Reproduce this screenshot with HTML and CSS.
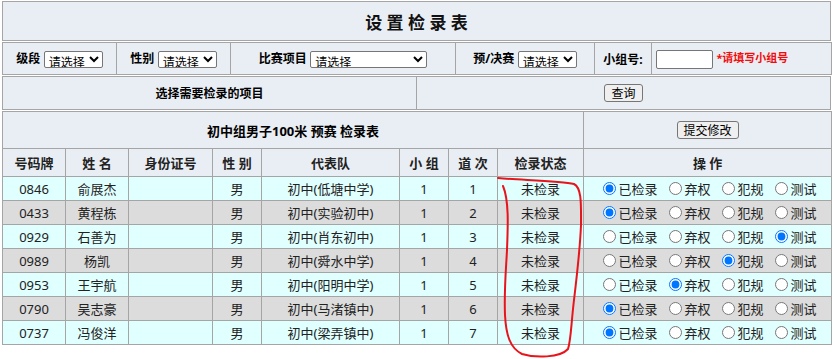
FILE: index.html
```html
<!DOCTYPE html>
<html lang="zh-CN">
<head>
    <meta charset="UTF-8">
    <title>设置检录表</title>
    <link rel="stylesheet" href="styles.css">
</head>
<body>
    <div class="page">
        <!-- Title -->
        <table class="title-bar">
            <tr><td>设 置 检 录 表</td></tr>
        </table>

        <!-- Filters -->
        <table class="filters">
            <colgroup>
                <col class="f-grade"><col class="f-sex"><col class="f-event"><col class="f-round"><col class="f-group-lbl"><col class="f-group">
            </colgroup>
            <tr>
                <td><span class="lbl">级段</span> <select class="sel"><option>请选择</option></select></td>
                <td><span class="lbl">性别</span> <select class="sel"><option>请选择</option></select></td>
                <td><span class="lbl">比赛项目</span> <select class="sel sel-wide"><option>请选择</option></select></td>
                <td><span class="lbl">预/决赛</span> <select class="sel"><option>请选择</option></select></td>
                <td><span class="lbl">小组号:</span></td>
                <td class="left"><input type="text" class="group-input"> <span class="hint">*请填写小组号</span></td>
            </tr>
        </table>

        <!-- Query -->
        <table class="query">
            <tr>
                <td class="lbl">选择需要检录的项目</td>
                <td><button class="btn">查询</button></td>
            </tr>
        </table>

        <!-- Roster -->
        <table class="roster">
            <colgroup>
                <col class="c-no"><col class="c-name"><col class="c-id"><col class="c-sex"><col class="c-team"><col class="c-group"><col class="c-lane"><col class="c-state"><col class="c-ops">
            </colgroup>
            <tr class="caption">
                <td colspan="8">初中组男子100米 预赛 检录表</td>
                <td><button class="btn">提交修改</button></td>
            </tr>
            <tr class="head">
                <th>号码牌</th><th>姓 名</th><th>身份证号</th><th>性 别</th><th>代表队</th><th>小 组</th><th>道 次</th><th>检录状态</th><th>操 作</th>
            </tr>
            <tr class="odd">
                <td>0846</td><td>俞展杰</td><td></td><td>男</td><td>初中(低塘中学)</td><td>1</td><td>1</td><td>未检录</td>
                <td><div class="ops">
                    <label class="opt"><input type="radio" name="r1" checked>已检录</label>
                    <label class="opt"><input type="radio" name="r1">弃权</label>
                    <label class="opt"><input type="radio" name="r1">犯规</label>
                    <label class="opt"><input type="radio" name="r1">测试</label>
                </div></td>
            </tr>
            <tr class="even">
                <td>0433</td><td>黄程栋</td><td></td><td>男</td><td>初中(实验初中)</td><td>1</td><td>2</td><td>未检录</td>
                <td><div class="ops">
                    <label class="opt"><input type="radio" name="r2" checked>已检录</label>
                    <label class="opt"><input type="radio" name="r2">弃权</label>
                    <label class="opt"><input type="radio" name="r2">犯规</label>
                    <label class="opt"><input type="radio" name="r2">测试</label>
                </div></td>
            </tr>
            <tr class="odd">
                <td>0929</td><td>石善为</td><td></td><td>男</td><td>初中(肖东初中)</td><td>1</td><td>3</td><td>未检录</td>
                <td><div class="ops">
                    <label class="opt"><input type="radio" name="r3">已检录</label>
                    <label class="opt"><input type="radio" name="r3">弃权</label>
                    <label class="opt"><input type="radio" name="r3">犯规</label>
                    <label class="opt"><input type="radio" name="r3" checked>测试</label>
                </div></td>
            </tr>
            <tr class="even">
                <td>0989</td><td>杨凯</td><td></td><td>男</td><td>初中(舜水中学)</td><td>1</td><td>4</td><td>未检录</td>
                <td><div class="ops">
                    <label class="opt"><input type="radio" name="r4">已检录</label>
                    <label class="opt"><input type="radio" name="r4">弃权</label>
                    <label class="opt"><input type="radio" name="r4" checked>犯规</label>
                    <label class="opt"><input type="radio" name="r4">测试</label>
                </div></td>
            </tr>
            <tr class="odd">
                <td>0953</td><td>王宇航</td><td></td><td>男</td><td>初中(阳明中学)</td><td>1</td><td>5</td><td>未检录</td>
                <td><div class="ops">
                    <label class="opt"><input type="radio" name="r5">已检录</label>
                    <label class="opt"><input type="radio" name="r5" checked>弃权</label>
                    <label class="opt"><input type="radio" name="r5">犯规</label>
                    <label class="opt"><input type="radio" name="r5">测试</label>
                </div></td>
            </tr>
            <tr class="even">
                <td>0790</td><td>吴志豪</td><td></td><td>男</td><td>初中(马渚镇中)</td><td>1</td><td>6</td><td>未检录</td>
                <td><div class="ops">
                    <label class="opt"><input type="radio" name="r6" checked>已检录</label>
                    <label class="opt"><input type="radio" name="r6">弃权</label>
                    <label class="opt"><input type="radio" name="r6">犯规</label>
                    <label class="opt"><input type="radio" name="r6">测试</label>
                </div></td>
            </tr>
            <tr class="odd">
                <td>0737</td><td>冯俊洋</td><td></td><td>男</td><td>初中(梁弄镇中)</td><td>1</td><td>7</td><td>未检录</td>
                <td><div class="ops">
                    <label class="opt"><input type="radio" name="r7" checked>已检录</label>
                    <label class="opt"><input type="radio" name="r7">弃权</label>
                    <label class="opt"><input type="radio" name="r7">犯规</label>
                    <label class="opt"><input type="radio" name="r7">测试</label>
                </div></td>
            </tr>
        </table>
    </div>

    <!-- hand-drawn annotation around the status column -->
    <svg class="mark" width="835" height="359" viewBox="0 0 835 359">
        <path d="M 498 178 C 520 180, 560 181, 574 184 C 582 188, 581 205, 581 225 C 580 250, 577 275, 574 300 C 571 325, 571 340, 568 349 C 560 358, 535 358, 522 354 C 510 348, 506 335, 505 315 C 504 290, 506 270, 507 250 C 508 225, 509 200, 503 186" fill="none" stroke="#e8141c" stroke-width="2" stroke-linecap="round"/>
    </svg>
</body>
</html>
```

FILE: styles.css
```css
body {
    margin: 0;
    padding: 0;
    min-height: 359px;
    background: #fff;
    color: #000;
    font-family: "Noto Sans", "Noto Sans CJK SC", sans-serif;
    font-size: 13px;
    position: relative;
}

.page {
    width: 829px;
    margin: 1px 0 0 2px;
}

table {
    width: 829px;
    border-collapse: collapse;
    table-layout: fixed;
    margin-bottom: 1px;
}

td, th {
    border: 1px solid #a5a5a5;
    padding: 0;
    text-align: center;
    white-space: nowrap;
}

.left {
    text-align: left;
    padding-left: 4px;
}

/* title */
.title-bar td {
    height: 38px;
    background: #e9eef4;
    font-size: 17px;
    font-weight: 700;
    color: #111;
}

/* filters */
.filters td {
    height: 31px;
    background: #e9eef4;
}

.f-grade { width: 114px; }
.f-sex { width: 114px; }
.f-event { width: 225px; }
.f-round { width: 139px; }
.f-group-lbl { width: 57px; }
.f-group { width: 180px; }

.lbl {
    font-size: 12px;
    font-weight: 700;
}

.sel {
    font-family: "Noto Sans CJK SC", sans-serif;
    font-size: 12px;
    height: 17px;
    padding: 0;
    border: 1px solid #767676;
    border-radius: 2px;
    background: #fff;
    vertical-align: middle;
}

.sel-wide {
    width: 117px;
}

.group-input {
    width: 53px;
    height: 15px;
    padding: 1px;
    border: 1px solid #767676;
    border-radius: 2px;
    vertical-align: middle;
}

.hint {
    color: #f20d0d;
    font-size: 11px;
    font-weight: 700;
}

/* query */
.query td {
    height: 32px;
    background: #e9eef4;
}

.btn {
    font-family: "Noto Sans CJK SC", sans-serif;
    font-size: 12px;
    line-height: 14px;
    padding: 1px 6px;
    background: #efefef;
    border: 1px solid #767676;
    border-radius: 3px;
    color: #000;
}

/* roster */
.c-no { width: 63px; }
.c-name { width: 63px; }
.c-id { width: 84px; }
.c-sex { width: 49px; }
.c-team { width: 138px; }
.c-group { width: 49px; }
.c-lane { width: 49px; }
.c-state { width: 86px; }
.c-ops { width: 248px; }

.caption td {
    height: 36px;
    background: #e9eef4;
    font-weight: 700;
}

.head th {
    height: 27px;
    background: #e9eef4;
    font-weight: 700;
    color: #222;
}

.roster .odd td,
.roster .even td {
    height: 23px;
    color: #222;
}

.odd td {
    background: #e0ffff;
}

.even td {
    background: #dcdcdc;
}

.ops {
    display: flex;
    justify-content: center;
    align-items: center;
    gap: 11px;
    padding-left: 4px;
}

.opt {
    display: inline-flex;
    align-items: center;
}

.opt input {
    width: 13px;
    height: 13px;
    margin: 0 3px 0 0;
}

.mark {
    position: absolute;
    left: 0;
    top: 0;
    pointer-events: none;
}
```
